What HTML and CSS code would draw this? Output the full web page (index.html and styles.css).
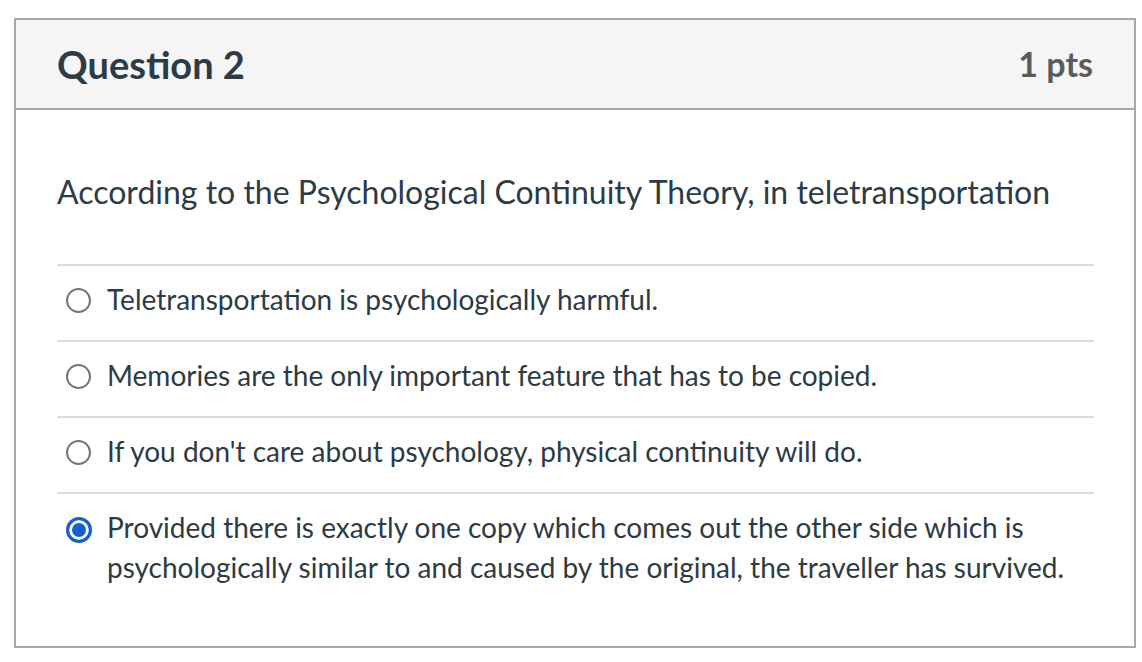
FILE: index.html
```html
<!DOCTYPE html>
<html>
<head>
<meta charset="utf-8">
<link rel="stylesheet" href="styles.css">
</head>
<body>
<div class="card">
  <div class="header">
    <h2 class="title">Question 2</h2>
    <div class="pts">1 pts</div>
  </div>
  <div class="body">
    <p class="question">According to the Psychological Continuity Theory, in teletransportation</p>
    <div class="answers">
      <div class="answer">
        <span class="slot"><span class="radio"></span></span>
        <span class="label">Teletransportation is psychologically harmful.</span>
      </div>
      <div class="answer">
        <span class="slot"><span class="radio"></span></span>
        <span class="label">Memories are the only important feature that has to be copied.</span>
      </div>
      <div class="answer">
        <span class="slot"><span class="radio"></span></span>
        <span class="label">If you don't care about psychology, physical continuity will do.</span>
      </div>
      <div class="answer answer-last">
        <span class="slot"><span class="radio checked"></span></span>
        <span class="label">Provided there is exactly one copy which comes out the other side which is psychologically similar to and caused by the original, the traveller has survived.</span>
      </div>
    </div>
  </div>
</div>
</body>
</html>
```

FILE: styles.css
```css
html, body {
  margin: 0;
  padding: 0;
  background: #ffffff;
}
body {
  padding: 18px 0 0 14px;
  font-family: "Lato", "Liberation Sans", sans-serif;
  color: #2d3b45;
}
.card {
  width: 1118px;
  border: 2px solid #a8a8a8;
}
.header {
  height: 88px;
  background: #f5f5f5;
  border-bottom: 2px solid #a8a8a8;
  display: flex;
  align-items: center;
  justify-content: space-between;
  padding: 0 41px 0 41px;
}
.title {
  margin: 0;
  font-size: 38px;
  font-weight: 700;
  color: #2d3b45;
  line-height: 44px;
}
.pts {
  font-size: 34px;
  font-weight: 700;
  color: #5b5b5b;
  line-height: 44px;
}
.body {
  padding: 0 40px 0 41px;
}
.question {
  margin: 0;
  padding-top: 64px;
  padding-bottom: 54px;
  font-size: 32px;
  line-height: 36px;
}
.answer {
  display: flex;
  align-items: flex-start;
  border-top: 2px solid #dddddd;
  padding: 13px 0 21px 0;
  font-size: 28px;
  line-height: 40px;
}
.answer-last {
  padding: 13px 0 59px 0;
}
.slot {
  width: 50px;
  flex: none;
  height: 40px;
  display: flex;
  align-items: flex-start;
}
.radio {
  box-sizing: border-box;
  width: 25px;
  height: 25px;
  margin: 9px 0 0 9px;
  border: 2px solid #757575;
  border-radius: 50%;
  background: #ffffff;
}
.radio.checked {
  width: 26px;
  height: 26px;
  margin-top: 10px;
  border: 3px solid #1560d0;
  box-shadow: inset 0 0 0 3px #ffffff;
  background: #1560d0;
}
.label {
  flex: 1;
}
```
